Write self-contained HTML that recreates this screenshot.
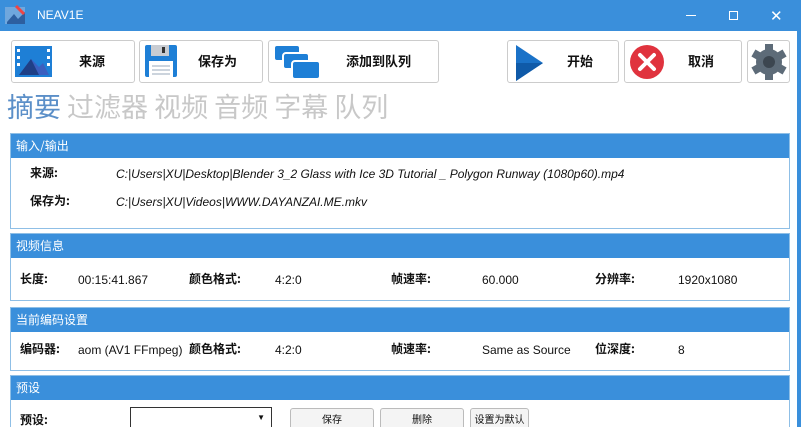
<!DOCTYPE html>
<html><head><meta charset="utf-8"><style>
*{margin:0;padding:0;box-sizing:border-box}
html,body{width:801px;height:427px;overflow:hidden}
body{background:#fff;font-family:"Liberation Sans","Noto Sans CJK SC",sans-serif;position:relative;font-size:12px;color:#111}
.title{position:absolute;left:0;top:0;width:801px;height:31px;background:#3a8fdb;color:#fff}
.title .t{position:absolute;left:37px;top:8px;font-size:12px}
.win{position:absolute;right:0;top:31px;width:4px;height:396px;background:#3a8fdb}
.btn{position:absolute;top:40px;height:43px;border:1px solid #ccc;border-radius:3px;background:#fff}
.btn span{position:absolute;top:11px;font-size:13px;font-weight:bold;line-height:18px;font-family:"Noto Sans CJK SC",sans-serif}
.tabs{position:absolute;left:7px;top:89px;font-size:27px;line-height:34px;color:#c8c8c8;font-family:"Noto Sans CJK SC",sans-serif}
.tabs b{font-weight:normal;color:#5b8fc8}
.panel{position:absolute;left:10px;width:780px;border:1px solid #8fbfe6}
.hd{height:24px;background:#3a8fdb;color:#fff;padding-left:5px;font-size:12px;line-height:24px;font-family:"Noto Sans CJK SC",sans-serif}
.lab{position:absolute;font-size:12px;line-height:16px}
.bd{font-weight:bold;font-family:"Noto Sans CJK SC",sans-serif}
.sb{position:absolute;top:408px;height:22px;border:1px solid #bbb;border-radius:3px;background:#f4f4f4;font-size:10px;text-align:center;line-height:20px;font-family:"Noto Sans CJK SC",sans-serif}
</style></head><body>
<div class="title">
<svg style="position:absolute;left:4px;top:4px" width="24" height="22"><rect x="1" y="3" width="20" height="17" fill="#6fa7dd"/><path d="M3 18 L10 10 L14 15 L21 8 L21 20 L3 20Z" fill="#2d5fa0"/><path d="M12 2 L20 10" stroke="#e44" stroke-width="3"/></svg>
<div class="t">NEAV1E</div>
<div style="position:absolute;left:686px;top:15px;width:10px;height:1px;background:#fff"></div>
<div style="position:absolute;left:729px;top:11px;width:9px;height:9px;border:1px solid #fff"></div>
<div style="position:absolute;left:770px;top:7px;color:#fff;font-size:15px">✕</div>
</div>
<div class="win"></div>

<div class="btn" style="left:11px;width:124px"><svg style="position:absolute;left:3px;top:4px" width="38" height="34"><rect x="0" y="1" width="37" height="31" fill="#1e7fd6"/><path d="M4 30 L16 14 L24 22 L28 18 L34 30Z" fill="#3b5fbf"/><path d="M4 30 L16 14 L24 30Z" fill="#1f3f86"/><g fill="#fff"><rect x="2" y="4" width="3" height="3"/><rect x="2" y="11" width="3" height="3"/><rect x="2" y="18" width="3" height="3"/><rect x="32" y="4" width="3" height="3"/><rect x="32" y="11" width="3" height="3"/><rect x="32" y="18" width="3" height="3"/></g></svg><span style="left:67px">来源</span></div>
<div class="btn" style="left:139px;width:124px"><svg style="position:absolute;left:5px;top:4px" width="34" height="34"><rect x="0" y="0" width="32" height="32" rx="2" fill="#1e7fd6"/><rect x="6" y="0" width="18" height="11" fill="#c8ccd2"/><rect x="17" y="2" width="3" height="6" fill="#333"/><rect x="4" y="16" width="24" height="16" fill="#fff"/><g stroke="#9ab" stroke-width="1"><line x1="7" y1="21" x2="25" y2="21"/><line x1="7" y1="25" x2="25" y2="25"/><line x1="7" y1="29" x2="25" y2="29"/></g></svg><span style="left:58px">保存为</span></div>
<div class="btn" style="left:268px;width:171px"><svg style="position:absolute;left:5px;top:4px" width="48" height="36"><rect x="0" y="0" width="26" height="16" rx="3" fill="#1e7fd6" stroke="#fff" stroke-width="2"/><rect x="9" y="8" width="26" height="16" rx="3" fill="#1e7fd6" stroke="#fff" stroke-width="2"/><rect x="18" y="16" width="28" height="18" rx="3" fill="#1e7fd6" stroke="#fff" stroke-width="2"/></svg><span style="left:77px">添加到队列</span></div>
<div class="btn" style="left:507px;width:112px"><svg style="position:absolute;left:7px;top:3px" width="30" height="38"><path d="M1 1 L28 19 L1 37Z" fill="#1a72c8"/><path d="M1 19 L28 19 L1 37Z" fill="#0f5aa8"/></svg><span style="left:59px">开始</span></div>
<div class="btn" style="left:624px;width:118px"><svg style="position:absolute;left:4px;top:3px" width="36" height="36"><circle cx="18" cy="18" r="17" fill="#e0333e"/><path d="M11 11 L25 25 M25 11 L11 25" stroke="#fff" stroke-width="4" stroke-linecap="round"/></svg><span style="left:63px">取消</span></div>
<div class="btn" style="left:747px;width:43px"><svg style="position:absolute;left:2px;top:2px" width="38" height="38" viewBox="0 0 38 38"><g fill="#5d6b78" transform="translate(19 19)"><circle r="13"/><rect x="-4" y="-18" width="8" height="36"/><rect x="-4" y="-18" width="8" height="36" transform="rotate(60)"/><rect x="-4" y="-18" width="8" height="36" transform="rotate(120)"/></g><circle cx="19" cy="19" r="6" fill="#3c4650"/></svg></div>

<div class="tabs"><b>摘要</b> 过滤器 视频 音频 字幕 队列</div>

<div class="panel" style="top:133px;height:96px"><div class="hd">输入/输出</div>
<div class="lab bd" style="left:19px;top:31px">来源:</div>
<div class="lab" style="left:105px;top:32px;font-style:italic">C:|Users|XU|Desktop|Blender 3_2 Glass with Ice 3D Tutorial _ Polygon Runway (1080p60).mp4</div>
<div class="lab bd" style="left:19px;top:59px">保存为:</div>
<div class="lab" style="left:105px;top:60px;font-style:italic">C:|Users|XU|Videos|WWW.DAYANZAI.ME.mkv</div>
</div>
<div class="panel" style="top:233px;height:68px"><div class="hd">视频信息</div>
<div class="lab bd" style="left:9px;top:37px">长度:</div><div class="lab" style="left:67px;top:38px">00:15:41.867</div>
<div class="lab bd" style="left:178px;top:37px">颜色格式:</div><div class="lab" style="left:264px;top:38px">4:2:0</div>
<div class="lab bd" style="left:380px;top:37px">帧速率:</div><div class="lab" style="left:471px;top:38px">60.000</div>
<div class="lab bd" style="left:584px;top:37px">分辨率:</div><div class="lab" style="left:667px;top:38px">1920x1080</div>
</div>
<div class="panel" style="top:307px;height:64px"><div class="hd">当前编码设置</div>
<div class="lab bd" style="left:9px;top:33px">编码器:</div><div class="lab" style="left:67px;top:34px">aom (AV1 FFmpeg)</div>
<div class="lab bd" style="left:178px;top:33px">颜色格式:</div><div class="lab" style="left:264px;top:34px">4:2:0</div>
<div class="lab bd" style="left:380px;top:33px">帧速率:</div><div class="lab" style="left:471px;top:34px">Same as Source</div>
<div class="lab bd" style="left:584px;top:33px">位深度:</div><div class="lab" style="left:667px;top:34px">8</div>
</div>
<div class="panel" style="top:375px;height:60px"><div class="hd">预设</div>
<div class="lab bd" style="left:9px;top:36px">预设:</div>
</div>
<div style="position:absolute;left:130px;top:407px;width:142px;height:25px;border:1px solid #333;background:#fff"><span style="position:absolute;right:6px;top:5px;font-size:8px">▼</span></div>
<div class="sb" style="left:290px;width:84px">保存</div>
<div class="sb" style="left:380px;width:84px">删除</div>
<div class="sb" style="left:470px;width:59px">设置为默认</div>
</body></html>
